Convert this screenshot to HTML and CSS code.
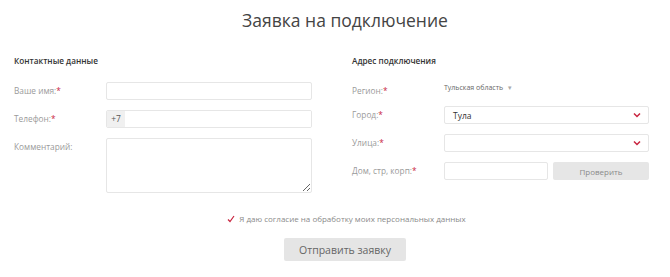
FILE: index.html
```html
<!DOCTYPE html>
<html lang="ru">
<head>
  <meta charset="UTF-8">
  <meta name="viewport" content="width=device-width, initial-scale=1.0">
  <title>Заявка на подключение</title>
  <link rel="stylesheet" href="styles.css">
</head>
<body>
  <h1 class="page-title">Заявка на подключение</h1>
  <form class="order-form">
    <div class="columns">
      <!-- Contact data -->
      <section class="col">
        <h2 class="col-title">Контактные данные</h2>
        <div class="row">
          <label class="row-label">Ваше имя:<span class="req">*</span></label>
          <input class="field" type="text">
        </div>
        <div class="row">
          <label class="row-label">Телефон:<span class="req">*</span></label>
          <div class="field phone">
            <span class="phone-prefix">+7</span>
            <input type="text">
          </div>
        </div>
        <div class="row row-top">
          <label class="row-label">Комментарий:</label>
          <textarea class="field comment"></textarea>
        </div>
      </section>

      <!-- Address -->
      <section class="col">
        <h2 class="col-title">Адрес подключения</h2>
        <div class="row row-region">
          <label class="row-label">Регион:<span class="req">*</span></label>
          <span class="region-value">Тульская область <span class="caret">&#9662;</span></span>
        </div>
        <div class="row">
          <label class="row-label">Город:<span class="req">*</span></label>
          <div class="field select">
            <span>Тула</span>
            <svg class="chevron" width="8" height="6" viewBox="0 0 8 6"><path d="M1 1.5 L4 4.5 L7 1.5" fill="none" stroke="#c9243f" stroke-width="1.5"/></svg>
          </div>
        </div>
        <div class="row">
          <label class="row-label">Улица:<span class="req">*</span></label>
          <div class="field select">
            <span></span>
            <svg class="chevron" width="8" height="6" viewBox="0 0 8 6"><path d="M1 1.5 L4 4.5 L7 1.5" fill="none" stroke="#c9243f" stroke-width="1.5"/></svg>
          </div>
        </div>
        <div class="row">
          <label class="row-label">Дом, стр, корп:<span class="req">*</span></label>
          <div class="house">
            <input class="field" type="text">
            <button type="button" class="check-btn">Проверить</button>
          </div>
        </div>
      </section>
    </div>

    <div class="bottom">
      <label class="consent">
        <svg class="tick" width="8" height="8" viewBox="0 0 8 8"><path d="M1 4.5 L3 6.5 L7 1" fill="none" stroke="#c9243f" stroke-width="1.2"/></svg>
        Я даю согласие на обработку моих персональных данных
      </label>
      <button type="button" class="submit-btn">Отправить заявку</button>
    </div>
  </form>
</body>
</html>
```

FILE: styles.css
```css
body {
  margin: 0;
  padding: 0;
  font-family: "Open Sans", Arial, sans-serif;
  background-color: #fff;
  color: #333;
}
.page-title {
  margin: 0;
  padding: 6px 0 0 20px;
  font-size: 17.5px;
  font-weight: 400;
  line-height: 28px;
  color: #444;
  text-align: center;
}
.columns {
  display: grid;
  grid-template-columns: 338px 318px;
  padding-left: 14px;
  margin-top: 20px;
}
.col-title {
  margin: 0 0 14px;
  font-size: 8.2px;
  font-weight: 600;
  line-height: 14px;
  color: #333;
}
.row {
  display: grid;
  grid-template-columns: 92px 206px;
  align-items: center;
  min-height: 18px;
  margin-bottom: 10px;
}
.col + .col .row {
  grid-template-columns: 92px 205px;
}
.row-top {
  align-items: start;
}
.row-label {
  font-size: 8.3px;
  line-height: 18px;
  color: #9a9a9a;
}
.req {
  color: #c9243f;
}
.field {
  box-sizing: border-box;
  height: 18px;
  margin: 0;
  padding: 0 8px;
  border: 1px solid #e6e6e6;
  border-radius: 2px;
  background-color: #fff;
  font-family: inherit;
  font-size: 8.5px;
  color: #333;
  outline: none;
}
.phone {
  display: flex;
  padding: 0;
  overflow: hidden;
}
.phone-prefix {
  width: 18px;
  background-color: #f0f0f0;
  font-size: 8.5px;
  line-height: 16px;
  text-align: center;
  color: #555;
}
.phone input {
  flex: 1;
  border: none;
  outline: none;
}
.comment {
  height: 55px;
  resize: vertical;
}
.row-region {
  align-items: start;
  margin-bottom: 6px;
}
.region-value {
  font-size: 7px;
  line-height: 12px;
  color: #666;
}
.caret {
  margin-left: 3px;
  font-size: 6.5px;
  color: #aaa;
}
.select {
  display: flex;
  align-items: center;
  justify-content: space-between;
}
.chevron {
  display: block;
  margin-right: -1px;
}
.house {
  display: grid;
  grid-template-columns: 104px 96px;
  gap: 5px;
}
.check-btn {
  height: 18px;
  padding: 0;
  border: none;
  border-radius: 2px;
  background-color: #e6e6e6;
  font-family: inherit;
  font-size: 8px;
  color: #8a8a8a;
  cursor: pointer;
}
.bottom {
  display: flex;
  flex-direction: column;
  align-items: center;
  padding-left: 20px;
  margin-top: 9px;
}
.consent {
  display: flex;
  align-items: center;
  gap: 4px;
  padding-left: 3px;
  font-size: 8px;
  line-height: 14px;
  color: #8a8a8a;
}
.tick {
  display: block;
}
.submit-btn {
  width: 122px;
  height: 23px;
  margin-top: 12px;
  border: none;
  border-radius: 2px;
  background-color: #e5e5e5;
  font-family: inherit;
  font-size: 10.5px;
  color: #666;
  cursor: pointer;
}
```
